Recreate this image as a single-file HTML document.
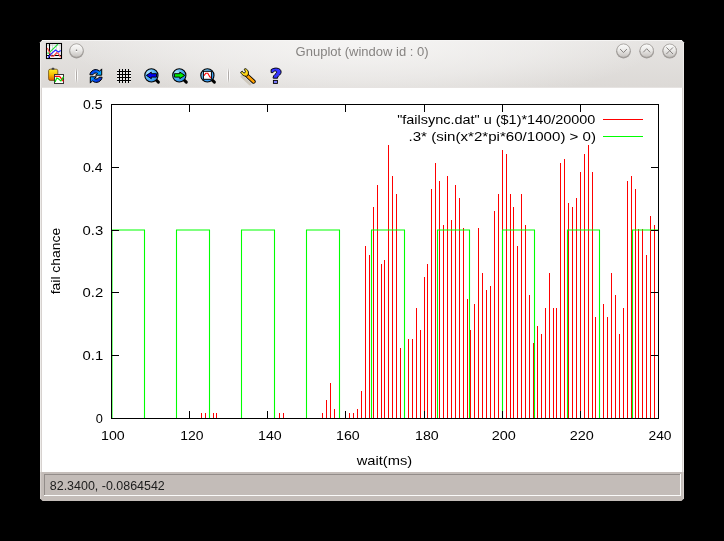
<!DOCTYPE html>
<html><head><meta charset="utf-8"><style>
html,body{margin:0;padding:0;background:#000;width:724px;height:541px;overflow:hidden}
svg{display:block;will-change:transform;font-family:"Liberation Sans",sans-serif}
</style></head><body>
<svg width="724" height="541" viewBox="0 0 724 541" font-family="Liberation Sans, sans-serif">
<defs>
<linearGradient id="tb" x1="0" y1="0" x2="0" y2="1">
<stop offset="0" stop-color="#e6e4e2"/><stop offset="1" stop-color="#dcd9d6"/>
</linearGradient>
<linearGradient id="btn" x1="0" y1="0" x2="0" y2="1">
<stop offset="0" stop-color="#fbfbfa"/><stop offset="0.45" stop-color="#ecebe9"/><stop offset="1" stop-color="#c4c0bd"/>
</linearGradient>
<linearGradient id="clip" x1="0" y1="0" x2="0" y2="1"><stop offset="0" stop-color="#fff12a"/><stop offset="0.5" stop-color="#f5c000"/><stop offset="1" stop-color="#e05a00"/></linearGradient>
<linearGradient id="blu" x1="0" y1="0" x2="1" y2="0.6"><stop offset="0" stop-color="#0a1ec8"/><stop offset="0.5" stop-color="#0050f0"/><stop offset="1" stop-color="#00b4ff"/></linearGradient>
<linearGradient id="blu2" x1="0" y1="0" x2="1" y2="0.6"><stop offset="0" stop-color="#10c8ff"/><stop offset="0.5" stop-color="#0050f0"/><stop offset="1" stop-color="#0a1ec8"/></linearGradient>
<radialGradient id="mag" cx="0.3" cy="0.3" r="0.75"><stop offset="0" stop-color="#b4e4ff"/><stop offset="0.45" stop-color="#5cbaf7"/><stop offset="1" stop-color="#2a8ce6"/></radialGradient>
<linearGradient id="wr" x1="0" y1="0" x2="1" y2="1"><stop offset="0" stop-color="#ffff40"/><stop offset="1" stop-color="#ffc000"/></linearGradient>
<radialGradient id="glow" cx="362" cy="40" r="300" gradientUnits="userSpaceOnUse" gradientTransform="translate(362 40) scale(1 0.22) translate(-362 -40)"><stop offset="0" stop-color="#f6f5f4" stop-opacity="1"/><stop offset="0.6" stop-color="#f6f5f4" stop-opacity="0.5"/><stop offset="1" stop-color="#f6f5f4" stop-opacity="0"/></radialGradient>
<linearGradient id="sepd" x1="0" y1="0" x2="0" y2="1"><stop offset="0" stop-color="#a9a4a1" stop-opacity="0"/><stop offset="0.3" stop-color="#a9a4a1" stop-opacity="0.9"/><stop offset="0.7" stop-color="#a9a4a1" stop-opacity="0.9"/><stop offset="1" stop-color="#a9a4a1" stop-opacity="0"/></linearGradient>
<linearGradient id="sepl" x1="0" y1="0" x2="0" y2="1"><stop offset="0" stop-color="#fff" stop-opacity="0"/><stop offset="0.3" stop-color="#fff" stop-opacity="0.85"/><stop offset="0.7" stop-color="#fff" stop-opacity="0.85"/><stop offset="1" stop-color="#fff" stop-opacity="0"/></linearGradient>
</defs>
<rect width="724" height="541" fill="#000"/>
<path d="M42.5 40H681.5L684 42.5V498.5L681.5 501H42.5L40 498.5V42.5Z" fill="#c4bdb9"/>
<path d="M42.5 40H681.5L684 42.5V88H40V42.5Z" fill="url(#tb)"/>
<rect x="40" y="40" width="644" height="48" fill="url(#glow)"/>
<g shape-rendering="crispEdges">
<rect x="42" y="40" width="640" height="1" fill="#f6f5f4"/>
<rect x="40" y="43" width="1" height="429" fill="#eeecea"/>
<rect x="683" y="43" width="1" height="429" fill="#eeecea"/>
<rect x="41" y="88" width="1" height="384" fill="#d7d2cf"/>
<rect x="682" y="88" width="1" height="384" fill="#d7d2cf"/>
<rect x="40" y="472" width="1" height="27" fill="#d6d0cd"/>
<rect x="683" y="472" width="1" height="27" fill="#d6d0cd"/>
<rect x="42" y="87" width="640" height="1" fill="#e6e3e1"/>
<rect x="42" y="88" width="640" height="384" fill="#fff"/>
</g>
<text x="295.6" y="55.7" font-size="12.6" textLength="133.02" lengthAdjust="spacingAndGlyphs" fill="#868381">Gnuplot (window id : 0)</text>
<g shape-rendering="crispEdges">
<rect x="44" y="474" width="637" height="22" fill="#c3bcb8"/>
<rect x="44" y="474" width="636" height="1" fill="#938d8a"/>
<rect x="44" y="474" width="1" height="21" fill="#938d8a"/>
<rect x="44" y="495" width="637" height="1" fill="#fbfbfa"/>
<rect x="680" y="474" width="1" height="22" fill="#fbfbfa"/>
</g>

<!-- window icon -->
<g>
<rect x="46.5" y="43.5" width="15" height="15" fill="#fff" stroke="#000" stroke-width="1.1"/>
<path d="M47 45.2H61M52.5 44V55M56.5 44V55M60 44V55M47 55.8H61" stroke="#cfcfcf" stroke-width="0.8" fill="none"/>
<path d="M49.5 44V58.5M47 55.5H61.5" stroke="#000" stroke-width="1.1"/>
<path d="M47.3 53.2L48.8 53.2L58 44.1" stroke="#22e040" stroke-width="1.2" fill="none"/>
<path d="M47.3 48L49.2 51.7L51.4 56.2L53.6 56.2L56.6 52.8L58 53.2L60.6 57.3" stroke="#ff4a4a" stroke-width="1.2" fill="none"/>
<path d="M48 57.6L51.4 53.6L55.5 50L58.4 52L60.8 50.6" stroke="#2a2aff" stroke-width="1.2" fill="none"/>
</g>
<!-- title buttons -->
<g>
<circle cx="76.5" cy="51.1" r="7.3" fill="#8e8a87" opacity="0.85"/>
<circle cx="76.5" cy="50.5" r="6.7" fill="url(#btn)" stroke="#a29e9b" stroke-width="0.8"/>
<circle cx="76.5" cy="51.4" r="0.8" fill="#fff"/><circle cx="76.5" cy="50.2" r="0.75" fill="#6e6a68"/>
<circle cx="623.5" cy="51.2" r="7.3" fill="#8e8a87" opacity="0.85"/>
<circle cx="623.5" cy="50.6" r="6.7" fill="url(#btn)" stroke="#a29e9b" stroke-width="0.8"/>
<path d="M620.1 49.0L623.5 52.6L626.9 49.0" stroke="#878381" stroke-width="1" fill="none"/>
<circle cx="646.7" cy="51.2" r="7.3" fill="#8e8a87" opacity="0.85"/>
<circle cx="646.7" cy="50.6" r="6.7" fill="url(#btn)" stroke="#a29e9b" stroke-width="0.8"/>
<path d="M643.3000000000001 52.300000000000004L646.7 48.7L650.1 52.300000000000004" stroke="#878381" stroke-width="1" fill="none"/>
<circle cx="669.7" cy="51.300000000000004" r="7.3" fill="#8e8a87" opacity="0.85"/>
<circle cx="669.7" cy="50.7" r="6.7" fill="url(#btn)" stroke="#a29e9b" stroke-width="0.8"/>
<path d="M666.4000000000001 47.400000000000006L673.0 54.0M673.0 47.400000000000006L666.4000000000001 54.0" stroke="#878381" stroke-width="1" fill="none"/>
</g>
<!-- toolbar -->
<g>
<g shape-rendering="crispEdges"><rect x="75" y="68" width="1" height="15" fill="url(#sepl)"/><rect x="77" y="68" width="1" height="15" fill="url(#sepl)"/><rect x="76" y="68" width="1" height="15" fill="url(#sepd)"/></g>
<g shape-rendering="crispEdges"><rect x="227" y="68" width="1" height="15" fill="url(#sepl)"/><rect x="229" y="68" width="1" height="15" fill="url(#sepl)"/><rect x="228" y="68" width="1" height="15" fill="url(#sepd)"/></g>
<!-- clipboard -->
<rect x="48.6" y="69.2" width="9.2" height="11.2" rx="1.6" fill="url(#clip)" stroke="#6b4a10" stroke-width="0.8"/>
<rect x="51.6" y="67.8" width="2.8" height="2" rx="0.8" fill="#444"/>
<rect x="54.5" y="74.5" width="9" height="9" fill="#fff" stroke="#333" stroke-width="1"/>
<path d="M55 76.4L59.6 76.4L63.5 81.3" stroke="#f00" stroke-width="1.2" fill="none"/>
<path d="M55 82L56.8 78L58.4 78.8L60.9 80.9L63.5 76.8" stroke="#0d0" stroke-width="1.2" fill="none"/>
<!-- refresh -->
<path d="M89.9 74.8C90.2 70.6 95.8 67.6 99.6 71.2L101.7 68.9V75.2H95.6L97.6 73.4C96 72.6 93.6 72.8 92.9 74.8Z" fill="url(#blu)" stroke="#000" stroke-width="1" stroke-linejoin="round"/>
<path d="M102.1 77.2C101.8 81.4 96.2 84.4 92.4 80.8L90.3 83.1V76.8H96.4L94.4 78.6C96 79.4 98.4 79.2 99.1 77.2Z" fill="url(#blu2)" stroke="#000" stroke-width="1" stroke-linejoin="round"/>
<!-- grid -->
<rect x="117.5" y="69.5" width="13" height="13" fill="#fff" opacity="0.9"/>
<path d="M119.5 69V83M122.5 69V83M125.5 69V83M128.5 69V83M117 71.5H131M117 74.5H131M117 77.5H131M117 80.5H131" stroke="#000" stroke-width="1.15"/>
<!-- magnifiers -->
<g id="mg1">
<path d="M156.3 80.2L158.4 82.2" stroke="#000" stroke-width="3" stroke-linecap="round"/>
<circle cx="151.4" cy="75.4" r="6.6" fill="url(#mag)" stroke="#000" stroke-width="1.1"/>
</g>
<path d="M146.4 75.4L151.3 72.1V73.7H156.5V77.1H151.3V78.7Z" fill="#0000f0" stroke="#000" stroke-width="0.95" stroke-linejoin="round"/>
<path d="M184.2 80.2L186.3 82.2" stroke="#000" stroke-width="3" stroke-linecap="round"/>
<circle cx="179.3" cy="75.4" r="6.6" fill="url(#mag)" stroke="#000" stroke-width="1.1"/>
<path d="M184.8 75.4L179.8 72.1V73.7H174.4V77.1H179.8V78.7Z" fill="#00ee00" stroke="#000" stroke-width="0.95" stroke-linejoin="round"/>
<path d="M212.3 80.2L214.4 82.2" stroke="#000" stroke-width="3" stroke-linecap="round"/>
<circle cx="207.4" cy="75.4" r="6.6" fill="url(#mag)" stroke="#000" stroke-width="1.1"/>
<rect x="203.4" y="71.3" width="8" height="8" fill="#fff" stroke="#000" stroke-width="1"/>
<path d="M204.1 75.6L205.7 73.3H207.8L209.8 76.8L211 77.6" stroke="#f00" stroke-width="1.1" fill="none"/>
<!-- wrench -->
<path d="M242 76.5L250 84" stroke="#c9c2b4" stroke-width="3" stroke-linecap="round" opacity="0.8"/>
<path d="M247 75.5L253.6 81.6" stroke="#000" stroke-width="4.2" stroke-linecap="round"/>
<path d="M247 75.5L253.6 81.6" stroke="#ffa000" stroke-width="2.5" stroke-linecap="round"/>
<path d="M240.6 72.3L242.3 71.2L243.4 72.8C244.6 73.2 245.6 72.5 245.4 71.3L244.2 69.3L245 68.6C247.2 69.2 249 71 248.4 74L247.4 76C245.8 76.6 242.6 76.2 240.6 72.3Z" fill="url(#wr)" stroke="#000" stroke-width="0.9" stroke-linejoin="round"/>
<!-- question -->
<path d="M271.1 69.6C272.8 68.4 275 68 276.5 68.1C279.8 68.3 281.3 70.2 281.1 72.3C280.9 74.6 278.6 75.6 277.6 77V78.2H273.2V77.2C273.2 75 276.7 73.6 276.7 72.2C276.7 71.3 275.9 71 275.2 71C274.2 71 273.3 71.6 272.9 72.6H271.1Z" fill="#3535ff" stroke="#000" stroke-width="0.95" stroke-linejoin="round"/>
<rect x="273.4" y="80.4" width="4" height="3" fill="#7a7aff" stroke="#000" stroke-width="0.9"/>
</g>
<text x="49.8" y="489.8" font-size="13.06" textLength="115.01" lengthAdjust="spacingAndGlyphs" fill="#1c1c1c">82.3400, -0.0864542</text>
<g shape-rendering="crispEdges">
<path d="M201.5 419V413M205.5 419V413M209.5 419V413M213.5 419V413M216.5 419V413M279.5 419V413M283.5 419V413M322.5 419V413M326.5 419V400M330.5 419V383M334.5 419V409M349.5 419V413M353.5 419V413M357.5 419V409M361.5 419V391M365.5 419V246M369.5 419V255M373.5 419V207M377.5 419V185M381.5 419V264M384.5 419V260M388.5 419V145M392.5 419V176M396.5 419V194M400.5 419V348M404.5 419V311M408.5 419V339M412.5 419V339M416.5 419V308M420.5 419V330M424.5 419V277M427.5 419V264M431.5 419V189M435.5 419V163M439.5 419V181M443.5 419V225M447.5 419V176M451.5 419V220M455.5 419V185M459.5 419V198M463.5 419V228M467.5 419V299M470.5 419V330M474.5 419V304M478.5 419V228M482.5 419V273M486.5 419V290M490.5 419V286M494.5 419V211M498.5 419V194M502.5 419V150M506.5 419V154M510.5 419V194M513.5 419V207M517.5 419V246M521.5 419V194M525.5 419V225M529.5 419V295M533.5 419V343M537.5 419V326M541.5 419V334M545.5 419V308M549.5 419V273M553.5 419V308M556.5 419V308M560.5 419V163M564.5 419V159M568.5 419V203M572.5 419V207M576.5 419V198M580.5 419V172M584.5 419V154M588.5 419V145M592.5 419V172M595.5 419V317M599.5 419V300M603.5 419V304M607.5 419V317M611.5 419V273M615.5 419V295M619.5 419V334M623.5 419V308M627.5 419V181M631.5 419V176M635.5 419V189M638.5 419V229M642.5 419V229M646.5 419V255M650.5 419V216M654.5 419V225M658.5 419V300" stroke="#f00" stroke-width="1" fill="none"/>
</g>
<path d="M111.5 230.00L144.5 230.00L144.5 418.50L176.5 418.50L176.5 230.00L209.5 230.00L209.5 418.50L241.5 418.50L241.5 230.00L274.5 230.00L274.5 418.50L306.5 418.50L306.5 230.00L339.5 230.00L339.5 418.50L371.5 418.50L371.5 230.00L404.5 230.00L404.5 418.50L437.5 418.50L437.5 230.00L469.5 230.00L469.5 418.50L502.5 418.50L502.5 230.00L534.5 230.00L534.5 418.50L567.5 418.50L567.5 230.00L599.5 230.00L599.5 418.50L632.5 418.50L632.5 230.00L658.5 230.00" stroke="#0f0" stroke-width="1.1" fill="none"/>
<path d="M112.5 230.5V418" stroke="#0f0" stroke-width="1" opacity="0.5" shape-rendering="crispEdges"/>
<g shape-rendering="crispEdges" stroke="#000" fill="none" stroke-width="1">
<path d="M111.5 104.5H658.5V418.5H111.5Z"/>
<path d="M111.5 418V411M111.5 105V112M189.5 418V411M189.5 105V112M267.5 418V411M267.5 105V112M345.5 418V411M345.5 105V112M424.5 418V411M424.5 105V112M502.5 418V411M502.5 105V112M580.5 418V411M580.5 105V112M658.5 418V411M658.5 105V112M112 418.5H119M658 418.5H651M112 355.5H119M658 355.5H651M112 292.5H119M658 292.5H651M112 230.5H119M658 230.5H651M112 167.5H119M658 167.5H651M112 104.5H119M658 104.5H651"/>
</g>
<g fill="#000"><text x="101.1" y="440.3" font-size="13.06" textLength="23.66" lengthAdjust="spacingAndGlyphs">100</text><text x="180.3" y="440.3" font-size="13.06" textLength="23.29" lengthAdjust="spacingAndGlyphs">120</text><text x="258.0" y="440.3" font-size="13.06" textLength="23.67" lengthAdjust="spacingAndGlyphs">140</text><text x="336.0" y="440.3" font-size="13.06" textLength="23.67" lengthAdjust="spacingAndGlyphs">160</text><text x="415.0" y="440.3" font-size="13.06" textLength="23.67" lengthAdjust="spacingAndGlyphs">180</text><text x="491.8" y="440.3" font-size="13.06" textLength="24.12" lengthAdjust="spacingAndGlyphs">200</text><text x="569.8" y="440.3" font-size="13.06" textLength="24.12" lengthAdjust="spacingAndGlyphs">220</text><text x="648.5" y="440.3" font-size="13.06" textLength="23.05" lengthAdjust="spacingAndGlyphs">240</text><text x="95.8" y="423.3" font-size="13.06" textLength="7.11" lengthAdjust="spacingAndGlyphs">0</text><text x="82.5" y="360.3" font-size="13.06" textLength="20.64" lengthAdjust="spacingAndGlyphs">0.1</text><text x="82.5" y="297.3" font-size="13.06" textLength="20.64" lengthAdjust="spacingAndGlyphs">0.2</text><text x="82.5" y="235.3" font-size="13.06" textLength="20.64" lengthAdjust="spacingAndGlyphs">0.3</text><text x="83.0" y="172.3" font-size="13.06" textLength="19.55" lengthAdjust="spacingAndGlyphs">0.4</text><text x="83.0" y="109.3" font-size="13.06" textLength="19.55" lengthAdjust="spacingAndGlyphs">0.5</text>
<text x="356.7" y="464.8" font-size="12.6" textLength="55.52" lengthAdjust="spacingAndGlyphs">wait(ms)</text>
<text transform="translate(59.7 294.3) rotate(-90)" font-size="13.2" textLength="66.5" lengthAdjust="spacingAndGlyphs">fail chance</text>
<text x="397.16" y="124.3" font-size="12.8" textLength="198.25" lengthAdjust="spacingAndGlyphs">"failsync.dat" u ($1)*140/20000</text>
<text x="408.5" y="141.3" font-size="12.6" textLength="187.54" lengthAdjust="spacingAndGlyphs">.3* (sin(x*2*pi*60/1000) &gt; 0)</text>
</g>
<path d="M603 119.5H643" stroke="#f00" stroke-width="1.2"/>
<path d="M603 136.5H643" stroke="#0f0" stroke-width="1.2"/>
</svg>
</body></html>
